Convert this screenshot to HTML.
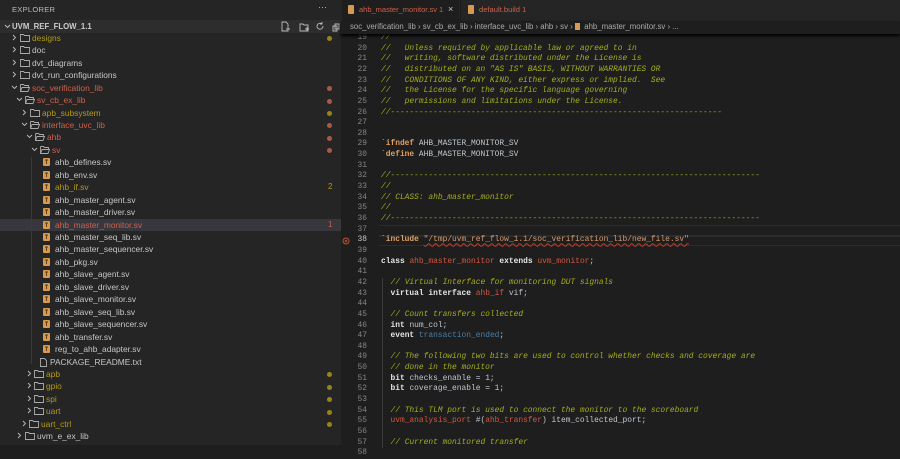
<!DOCTYPE html>
<html><head><meta charset="utf-8"><style>
*{margin:0;padding:0;box-sizing:border-box}
body{width:900px;height:445px;overflow:hidden;background:#1e1e1e;font-family:"Liberation Sans",sans-serif;position:relative}
#side{position:absolute;left:0;top:0;width:341px;height:445px;background:#252526}
.r{position:absolute;left:0;width:341px;height:12.4px;font-size:8.4px;line-height:12.4px;color:#c6c6c6;white-space:nowrap}
.r span{position:absolute;top:0}
.r svg{position:absolute;top:2px}
.y{color:#b59a10!important}.rd{color:#d0604a!important}
.dot{position:absolute;left:327px;top:4.5px;width:5px;height:5px;border-radius:50%}
.bd{position:absolute;left:328px;font-size:8px}
#ed{position:absolute;left:341px;top:0;width:559px;height:445px;background:#1e1e1e}
.ln{position:absolute;left:0;width:26px;text-align:right;font-family:"Liberation Mono",monospace;font-size:7.9px;color:#858585}
.cd{position:absolute;left:40px;font-family:"Liberation Mono",monospace;font-size:7.9px;color:#bfc7cf;white-space:pre}
.c{color:#a4ae1c;font-style:italic}
.k{color:#e6e6e6;font-weight:bold}
.t{color:#d2563d}
.p{color:#e0a060;font-weight:bold}
.s{color:#d99a6c;text-decoration:underline wavy #c04030;text-decoration-thickness:1px}
.b{color:#4b7ea8}
</style></head><body>
<div id="side">
<div style="position:absolute;left:12px;top:5px;font-size:7.5px;color:#bbb;letter-spacing:.3px">EXPLORER</div>
<div style="position:absolute;left:318px;top:2px;font-size:9px;color:#bbb">···</div>
<div style="position:absolute;left:0;top:20px;width:341px;height:13px;background:#2d2d2e"></div>
<svg style="position:absolute;left:4px;top:23px" width="7" height="7" viewBox="0 0 7 7"><path d="M1 2l2.5 2.5L6 2" stroke="#bbb" fill="none"/></svg>
<div style="position:absolute;left:12px;top:21px;font-size:7.8px;font-weight:bold;color:#ccc;line-height:11px">UVM_REF_FLOW_1.1</div>
<svg style="position:absolute;left:280px;top:21px" width="60" height="11" viewBox="0 0 60 11" fill="none" stroke="#bbb" stroke-width=".9">
<path d="M2 1h4l2 2v7H2z M6 8h4M8 6v4"/><path d="M20 3h3l1 1h4v6h-8z M25 8h4M27 6v4"/><path d="M42 3a3 3 0 1 0 1 2M42 1v2h-2"/><path d="M55 3h4v5h-4z M53 5h4v5h-4z"/></svg>
<div id="tree"></div>
<div style="position:absolute;left:31px;top:157px;width:1px;height:207px;background:#3a3a3a"></div>
</div>
<div id="ed">
<div style="position:absolute;left:0;top:0;width:559px;height:21px;background:#252526"></div>
<div style="position:absolute;left:1px;top:0;width:117px;height:21px;background:#1e1e1e"></div>
<div style="position:absolute;left:7px;top:5px;width:6px;height:9px;background:#d89a50;border-radius:1px"></div>
<div style="position:absolute;left:18px;top:5px;font-size:7.5px;color:#d0604a;white-space:nowrap">ahb_master_monitor.sv 1</div>
<div style="position:absolute;left:107px;top:4px;font-size:9px;color:#ccc">×</div>
<div style="position:absolute;left:119px;top:0;width:1px;height:21px;background:#1a1a1a"></div>
<div style="position:absolute;left:127px;top:5px;width:6px;height:9px;background:#d89a50;border-radius:1px"></div>
<div style="position:absolute;left:138px;top:5px;font-size:7.6px;color:#d0604a">default.build 1</div>
<div style="position:absolute;left:0;top:21px;width:559px;height:13px;background:#1e1e1e;box-shadow:0 2px 3px #000;z-index:2"></div>
<div style="position:absolute;left:9px;top:22px;font-size:7.8px;color:#aaa;white-space:nowrap;z-index:3">soc_verification_lib › sv_cb_ex_lib › interface_uvc_lib › ahb › sv › <span style="display:inline-block;width:5px;height:7px;background:#d89a50;vertical-align:-1px"></span>&nbsp; ahb_master_monitor.sv › ...</div>
<div style="position:absolute;left:38px;top:225px;width:521px;height:10.65px;border-top:1px solid #2c2c2c;border-bottom:1px solid #2c2c2c"></div>
<div style="position:absolute;left:38px;top:235.5px;width:521px;height:10.65px;border-top:1px solid #2c2c2c;border-bottom:1px solid #2c2c2c"></div>
<div style="position:absolute;left:41px;top:278px;width:1px;height:170px;background:#3a3a3a"></div>
<svg style="position:absolute;left:1px;top:236.5px" width="8" height="8" viewBox="0 0 8 8"><circle cx="4" cy="4" r="3" fill="none" stroke="#c0502e"/><path d="M2.8 2.8l2.4 2.4M5.2 2.8L2.8 5.2" stroke="#c0502e" stroke-width=".8"/></svg>
<div id="code"></div>
</div>
<script>
var F='<svg width="10" height="8" viewBox="0 0 10 8"><path d="M.5 .5h3l1 1h5v6H.5z" fill="none" stroke="#aaa" stroke-width=".9"/></svg>';
var FO='<svg width="10" height="8" viewBox="0 0 10 8"><path d="M.5 .5h3l1 1h4v2M.5 .5v7h7.5l1.5-4H2L.5 7.5" fill="none" stroke="#aaa" stroke-width=".9"/></svg>';
var FI='<svg width="7" height="8" viewBox="0 0 7 8"><rect width="7" height="8" rx="1" fill="#d89a50"/><path d="M2 2h3M3.5 2v4" stroke="#5a3a10" stroke-width=".9"/></svg>';
var TX='<svg width="7" height="9" viewBox="0 0 7 9"><path d="M.5.5h4l2 2v6h-6z" fill="none" stroke="#aaa" stroke-width=".9"/></svg>';
function ch(o){return o?'<svg width="7" height="7" viewBox="0 0 7 7"><path d="M1 2l2.5 2.5L6 2" stroke="#bbb" fill="none" stroke-width=".9"/></svg>':'<svg width="7" height="7" viewBox="0 0 7 7"><path d="M2 1l2.5 2.5L2 6" stroke="#bbb" fill="none" stroke-width=".9"/></svg>';}
var rows=[
['designs',10,0,'y','y'],['doc',10,0,'',''],['dvt_diagrams',10,0,'',''],['dvt_run_configurations',10,0,'',''],
['soc_verification_lib',10,1,'rd','rd'],['sv_cb_ex_lib',15,1,'rd','rd'],['apb_subsystem',20,0,'y','y'],['interface_uvc_lib',20,1,'rd','rd'],
['ahb',25,1,'rd','rd'],['sv',30,1,'rd','rd']];
var files=['ahb_defines','ahb_env','ahb_if','ahb_master_agent','ahb_master_driver','ahb_master_monitor','ahb_master_seq_lib','ahb_master_sequencer','ahb_pkg','ahb_slave_agent','ahb_slave_driver','ahb_slave_monitor','ahb_slave_seq_lib','ahb_slave_sequencer','ahb_transfer','reg_to_ahb_adapter'];
var h='',i=0;
function tp(i){return 31.8+i*12.45;}
rows.forEach(function(r){h+='<div class="r" style="top:'+tp(i)+'px"><span style="left:'+(r[1]+1)+'px;top:0">'+ch(r[2])+'</span><span style="left:'+(r[1]+10)+'px">'+(r[2]?FO:F)+'</span><span class="'+r[3]+'" style="left:'+(r[1]+22)+'px">'+r[0]+'</span>'+(r[4]?'<div class="dot" style="background:'+(r[4]=='y'?'#9a8418':'#a85a48')+'"></div>':'')+'</div>';i++;});
files.forEach(function(f){var c=f=='ahb_if'?'y':f=='ahb_master_monitor'?'rd':'';var bg=f=='ahb_master_monitor'?'background:#37373d;':'';
h+='<div class="r" style="'+bg+'top:'+tp(i)+'px"><span style="left:43px">'+FI+'</span><span class="'+c+'" style="left:55px">'+f+'.sv</span>'+(f=='ahb_if'?'<span class="bd y">2</span>':'')+(f=='ahb_master_monitor'?'<span class="bd rd">1</span>':'')+'</div>';i++;});
h+='<div class="r" style="top:'+tp(i)+'px"><span style="left:40px">'+TX+'</span><span style="left:50px">PACKAGE_README.txt</span></div>';i++;
[['apb',25],['gpio',25],['spi',25],['uart',25],['uart_ctrl',20]].forEach(function(r){h+='<div class="r" style="top:'+tp(i)+'px"><span style="left:'+(r[1]+1)+'px">'+ch(0)+'</span><span style="left:'+(r[1]+9)+'px">'+F+'</span><span class="y" style="left:'+(r[1]+21)+'px">'+r[0]+'</span><div class="dot" style="background:#9a8418"></div></div>';i++;});
h+='<div class="r" style="top:'+tp(i)+'px"><span style="left:16px">'+ch(0)+'</span><span style="left:25px">'+F+'</span><span style="left:37px">uvm_e_ex_lib</span></div>';
document.getElementById('tree').innerHTML=h;
var d72='//'+'-'.repeat(70),d80='//'+'-'.repeat(78);
function c(s){return '<span class="c">'+s+'</span>';}
var L={19:c('//'),20:c('//   Unless required by applicable law or agreed to in'),21:c('//   writing, software distributed under the License is'),22:c('//   distributed on an "AS IS" BASIS, WITHOUT WARRANTIES OR'),23:c('//   CONDITIONS OF ANY KIND, either express or implied.  See'),24:c('//   the License for the specific language governing'),25:c('//   permissions and limitations under the License.'),26:c(d72),
29:'<span class="p">`ifndef</span> AHB_MASTER_MONITOR_SV',30:'<span class="p">`define</span> AHB_MASTER_MONITOR_SV',
32:c(d80),33:c('//'),34:c('// CLASS: ahb_master_monitor'),35:c('//'),36:c(d80),
38:'<span class="p">`include</span> <span class="s">"/tmp/uvm_ref_flow_1.1/soc_verification_lib/new_file.sv"</span>',
40:'<span class="k">class</span> <span class="t">ahb_master_monitor</span> <span class="k">extends</span> <span class="t">uvm_monitor</span>;',
42:'  '+c('// Virtual Interface for monitoring DUT signals'),43:'  <span class="k">virtual interface</span> <span class="t">ahb_if</span> vif;',
45:'  '+c('// Count transfers collected'),46:'  <span class="k">int</span> num_col;',47:'  <span class="k">event</span> <span class="b">transaction_ended</span>;',
49:'  '+c('// The following two bits are used to control whether checks and coverage are'),50:'  '+c('// done in the monitor'),
51:'  <span class="k">bit</span> checks_enable = 1;',52:'  <span class="k">bit</span> coverage_enable = 1;',
54:'  '+c('// This TLM port is used to connect the monitor to the scoreboard'),55:'  <span class="t">uvm_analysis_port</span> #(<span class="t">ahb_transfer</span>) item_collected_port;',57:'  '+c('// Current monitored transfer')};
var o='';
for(var n=19;n<=58;n++){var t=43.6+(n-20)*10.65;o+='<div class="ln" style="top:'+t+'px;line-height:10.65px;'+(n==38?'color:#c6c6c6':'')+'">'+n+'</div><div class="cd" style="top:'+t+'px;line-height:10.65px">'+(L[n]||'')+'</div>';}
document.getElementById('code').innerHTML=o;
</script>
</body></html>
